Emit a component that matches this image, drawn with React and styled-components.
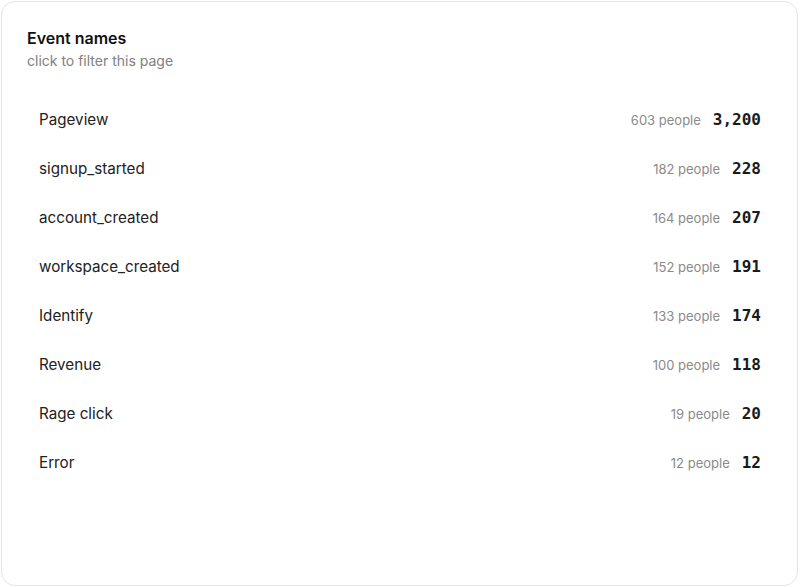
import React from "react";
import styled, { createGlobalStyle } from "styled-components";

const GlobalStyle = createGlobalStyle`
  body {
    margin: 0;
    background: #ffffff;
    font-family: Inter, "Noto Sans", sans-serif;
  }
`;

const events = [
  { name: "Pageview", people: 603, count: "3,200" },
  { name: "signup_started", people: 182, count: "228" },
  { name: "account_created", people: 164, count: "207" },
  { name: "workspace_created", people: 152, count: "191" },
  { name: "Identify", people: 133, count: "174" },
  { name: "Revenue", people: 100, count: "118" },
  { name: "Rage click", people: 19, count: "20" },
  { name: "Error", people: 12, count: "12" },
];

const Page = styled.div`
  padding: 1px 2px 1px 1px;
  height: 587px;
  box-sizing: border-box;
`;

const Card = styled.div`
  height: 100%;
  box-sizing: border-box;
  border: 1px solid #e4e4e4;
  border-radius: 14px;
  padding: 26px 25px;
`;

const Title = styled.h2`
  margin: 0;
  font-size: 16px;
  font-weight: 600;
  color: #111;
  line-height: 20px;
`;

const Subtitle = styled.p`
  margin: 3px 0 0;
  font-size: 14px;
  color: #808080;
  line-height: 20px;
`;

const List = styled.ul`
  list-style: none;
  margin: 24px 0 0;
  padding: 0;
`;

const Row = styled.li`
  display: flex;
  align-items: center;
  height: 49px;
  padding: 0 11px 0 12px;
  cursor: pointer;
`;

const Name = styled.span`
  flex: 1;
  font-size: 15.2px;
  color: #222;
`;

const People = styled.span`
  font-size: 13px;
  color: #8a8a8a;
  margin-right: 12px;
`;

const Count = styled.span`
  font-family: "DejaVu Sans Mono", "Liberation Mono", monospace;
  font-weight: 700;
  font-size: 16px;
  color: #1a1a1a;
`;

export default function App() {
  return (
    <>
      <GlobalStyle />
      <Page>
        <Card>
          <Title>Event names</Title>
          <Subtitle>click to filter this page</Subtitle>
          <List>
            {events.map((e) => (
              <Row key={e.name}>
                <Name>{e.name}</Name>
                <People>{e.people} people</People>
                <Count>{e.count}</Count>
              </Row>
            ))}
          </List>
        </Card>
      </Page>
    </>
  );
}
